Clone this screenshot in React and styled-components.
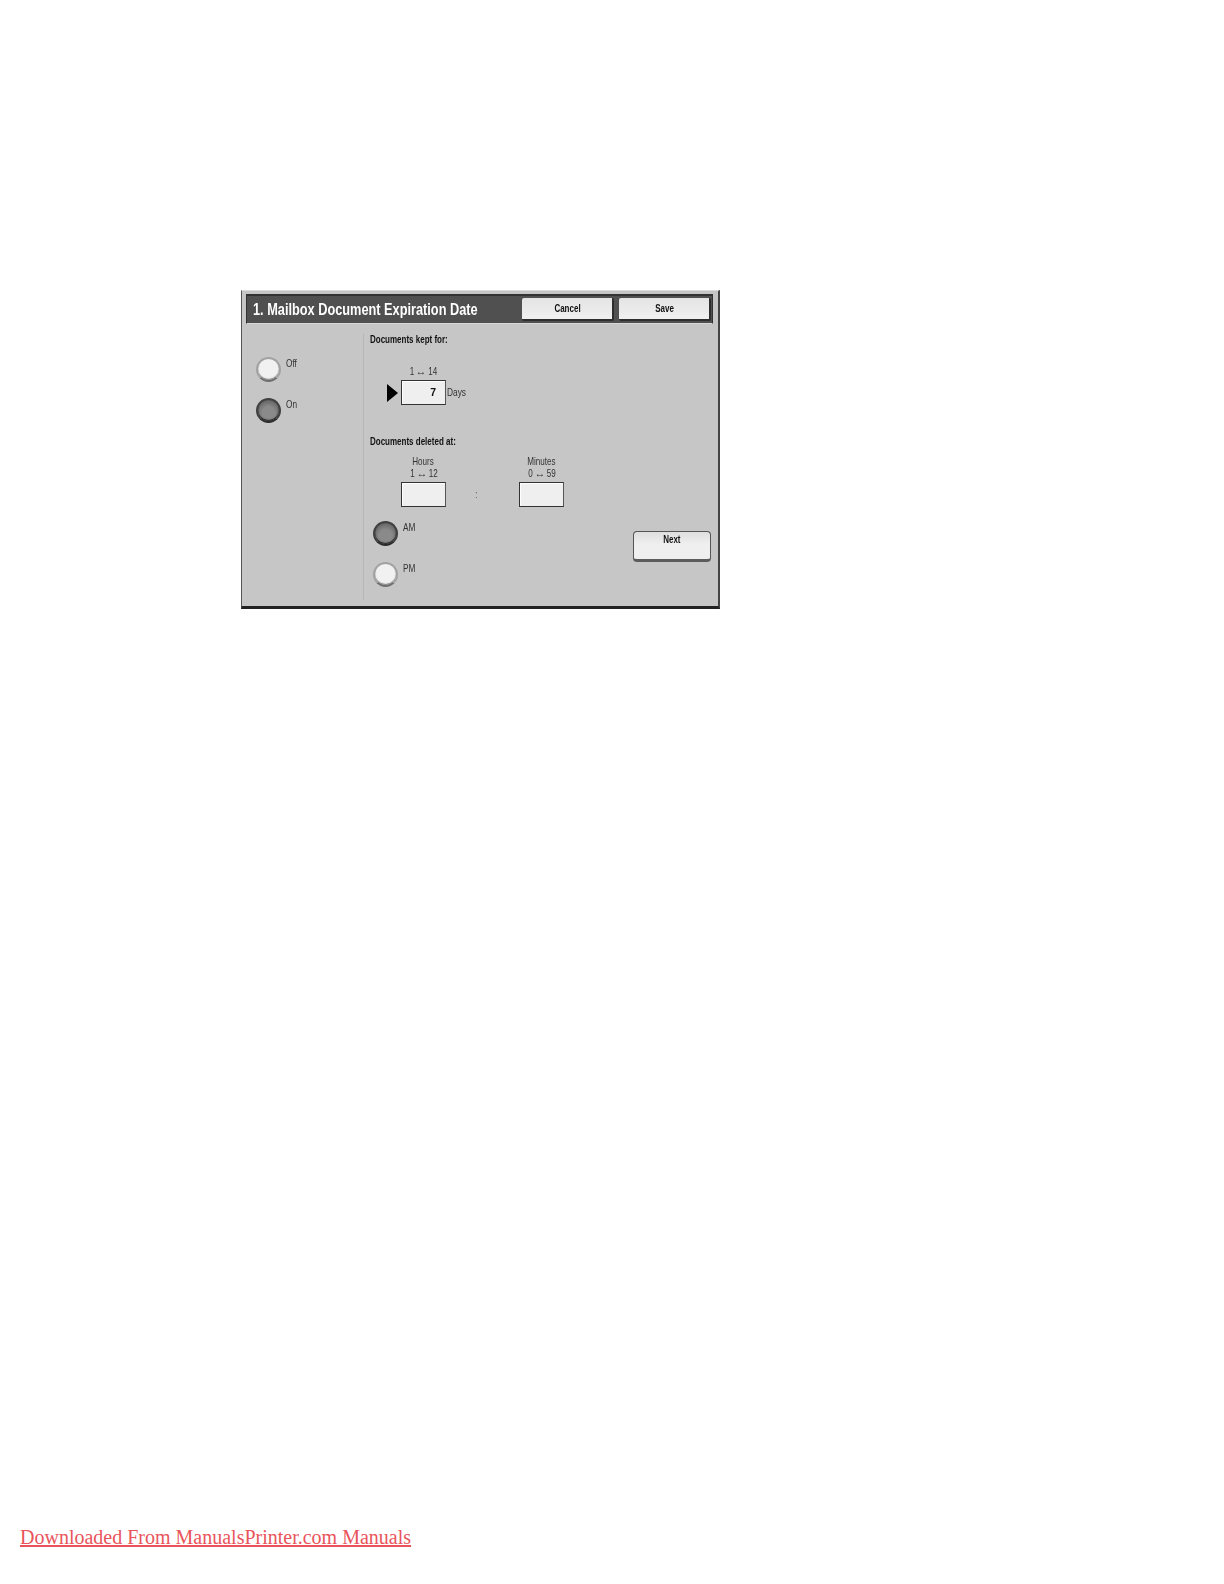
import styled, { createGlobalStyle } from 'styled-components';

const GlobalStyle = createGlobalStyle`
  body {
    margin: 0;
    background: #fff;
    font-family: "Liberation Sans", Arial, sans-serif;
  }
`;

export default function App() {
  return (
    <>
      <GlobalStyle />
      <Page>
        <Panel>
          <Header>
            <TitleBox>
              <Title>1. Mailbox Document Expiration Date</Title>
            </TitleBox>
            <HeaderButton><ButtonText>Cancel</ButtonText></HeaderButton>
            <HeaderButton><ButtonText>Save</ButtonText></HeaderButton>
          </Header>
          <Body>
            <SideColumn>
              <RadioList>
                <RadioOption label="Off" />
                <RadioOption label="On" on />
              </RadioList>
            </SideColumn>
            <MainColumn>
              <Heading>Documents kept for:</Heading>
              <RangeLabel $top={19}>1 <Swap>↔</Swap> 14</RangeLabel>
              <KeptRow>
                <Arrow />
                <Field>7</Field>
                <Unit>Days</Unit>
              </KeptRow>
              <Heading $top={31}>Documents deleted at:</Heading>
              <TimeRow>
                <TimeGroup>
                  <RangeText>Hours</RangeText>
                  <RangeText>1 <Swap>↔</Swap> 12</RangeText>
                  <Field />
                </TimeGroup>
                <Colon>:</Colon>
                <TimeGroup>
                  <RangeText>Minutes</RangeText>
                  <RangeText>0 <Swap>↔</Swap> 59</RangeText>
                  <Field />
                </TimeGroup>
              </TimeRow>
              <BottomRow>
                <RadioList $indent={3}>
                  <RadioOption label="AM" on />
                  <RadioOption label="PM" />
                </RadioList>
                <NextButton><ButtonText>Next</ButtonText></NextButton>
              </BottomRow>
            </MainColumn>
          </Body>
        </Panel>
        <Footer>
          <FooterLink href="#">Downloaded From ManualsPrinter.com Manuals</FooterLink>
        </Footer>
      </Page>
    </>
  );
}

function RadioOption({ label, on }) {
  return (
    <RadioRow>
      <Radio $on={on} />
      <RadioLabel>{label}</RadioLabel>
    </RadioRow>
  );
}

const Page = styled.div`
  height: 1584px;
  display: flex;
  flex-direction: column;
  align-items: flex-start;
  overflow: hidden;
`;

const Panel = styled.div`
  width: 479px;
  height: 319px;
  margin: 290px 0 0 241px;
  box-sizing: border-box;
  padding: 3px 2px 0 4px;
  display: flex;
  flex-direction: column;
  background: #c6c6c6;
  border-top: 1px solid #dcdcdc;
  border-left: 1px solid #555;
  border-right: 2px solid #444;
  border-bottom: 3px solid #222;
  filter: blur(0.4px);
`;

const Header = styled.div`
  height: 30px;
  margin-right: 3px;
  box-sizing: border-box;
  display: flex;
  align-items: center;
  gap: 5px;
  padding: 0 1px 0 6px;
  background: #505050;
  border-top: 2px solid #333;
  border-left: 1px solid #333;
  border-right: 1px solid #333;
  border-bottom: 1px solid #d8d8d8;
`;

const TitleBox = styled.div`
  flex: 1;
  min-width: 0;
`;

const Title = styled.h1`
  margin: 0;
  color: #fff;
  font-size: 16px;
  font-weight: 700;
  line-height: 20px;
  white-space: nowrap;
  transform: scaleX(0.797);
  transform-origin: left center;
`;

const ButtonText = styled.span`
  display: block;
  transform: scaleX(0.8);
`;

const HeaderButton = styled.button`
  width: 92px;
  height: 23px;
  flex: none;
  padding: 0 0 0 1px;
  box-sizing: border-box;
  border: 0;
  border-bottom: 2px solid #2e2e2e;
  border-right: 2px solid #2e2e2e;
  border-radius: 2px;
  background: linear-gradient(#e4e4e4, #f0f0f0);
  color: #111;
  font: 700 10px/14px "Liberation Sans", Arial, sans-serif;
`;

const Body = styled.div`
  flex: 1;
  display: flex;
`;

const SideColumn = styled.div`
  width: 117px;
  padding: 33px 0 0 10px;
  box-sizing: border-box;
`;

const MainColumn = styled.div`
  flex: 1;
  margin: 10px 0 6px;
  padding: 0 5px 0 6px;
  border-left: 1px solid #b6b6b6;
`;

const RadioList = styled.div`
  display: flex;
  flex-direction: column;
  gap: 16px;
  margin-left: ${(p) => p.$indent || 0}px;
`;

const RadioRow = styled.div`
  display: flex;
  align-items: flex-start;
  gap: 5px;
`;

const Radio = styled.span`
  width: 25px;
  height: 25px;
  box-sizing: border-box;
  border-radius: 50%;
  border: 2px solid ${(p) => (p.$on ? '#404040' : '#a2a2a2')};
  border-bottom-color: ${(p) => (p.$on ? '#2c2c2c' : '#6f6f6f')};
  background: ${(p) =>
    p.$on
      ? 'radial-gradient(circle at 50% 62%, #8a8a8a 0 38%, #666 76%, #484848 100%)'
      : 'radial-gradient(circle at 50% 45%, #f1f1f1 0 65%, #e4e4e4 85%, #c4c4c4 100%)'};
  box-shadow: inset 0 -1px 1px ${(p) => (p.$on ? '#222' : '#808080')};
`;

const RadioLabel = styled.span`
  color: #333;
  font-size: 11px;
  line-height: 12px;
  transform: scaleX(0.75);
  transform-origin: left center;
`;

const Heading = styled.div`
  margin-top: ${(p) => p.$top || 0}px;
  color: #111;
  font-size: 10px;
  font-weight: 700;
  line-height: 12px;
  white-space: nowrap;
  transform: scaleX(0.8);
  transform-origin: left center;
`;

const RangeText = styled.div`
  color: #333;
  font-size: 10.5px;
  line-height: 12px;
  text-align: center;
  white-space: nowrap;
  transform: scaleX(0.77);
`;

const Swap = styled.span`
  display: inline-block;
  margin: 0 1px;
  transform: scaleX(1.35);
`;

const RangeLabel = styled(RangeText)`
  width: 45px;
  margin: ${(p) => p.$top}px 0 0 31px;
`;

const KeptRow = styled.div`
  display: flex;
  align-items: center;
  margin: 3px 0 0 17px;
`;

const Arrow = styled.span`
  width: 0;
  height: 0;
  margin-right: 3px;
  border-style: solid;
  border-width: 9px 0 9px 11px;
  border-color: transparent transparent transparent #000;
`;

const Field = styled.div`
  width: 45px;
  height: 25px;
  box-sizing: border-box;
  padding-right: 9px;
  border: 1px solid #333;
  border-right-color: #555;
  background: #efefef;
  box-shadow: inset 1px 1px 1px #fff;
  color: #111;
  font-size: 10.5px;
  font-weight: 700;
  line-height: 23px;
  text-align: right;
`;

const Unit = styled.span`
  margin: -2px 0 0 1px;
  color: #333;
  font-size: 11px;
  transform: scaleX(0.76);
  transform-origin: left center;
`;

const TimeRow = styled.div`
  display: flex;
  margin: 7px 0 0 31px;
`;

const TimeGroup = styled.div`
  width: 45px;
  display: flex;
  flex-direction: column;
  align-items: center;

  ${Field} {
    margin-top: 3px;
  }
`;

const Colon = styled.div`
  width: 73px;
  box-sizing: border-box;
  padding: 34px 12px 0 0;
  color: #666;
  font-size: 10px;
  line-height: 12px;
  text-align: center;
`;

const BottomRow = styled.div`
  display: flex;
  justify-content: space-between;
  align-items: flex-start;
  margin-top: 14px;
`;

const NextButton = styled.button`
  width: 78px;
  height: 31px;
  margin-top: 10px;
  padding: 2px 0 0;
  box-sizing: border-box;
  border: 1px solid #555;
  border-bottom: 3px solid #5c5c5c;
  border-radius: 4px;
  background: linear-gradient(#dedede, #efefef 45%, #efefef);
  color: #111;
  font: 700 10px/12px "Liberation Sans", Arial, sans-serif;
  display: flex;
  justify-content: center;
  align-items: flex-start;
`;

const Footer = styled.div`
  margin-top: 916px;
  padding-left: 20px;
`;

const FooterLink = styled.a`
  color: #e9545a;
  font-family: "Liberation Serif", "Times New Roman", serif;
  font-size: 20px;
  line-height: 24px;
  text-decoration: underline;
`;
